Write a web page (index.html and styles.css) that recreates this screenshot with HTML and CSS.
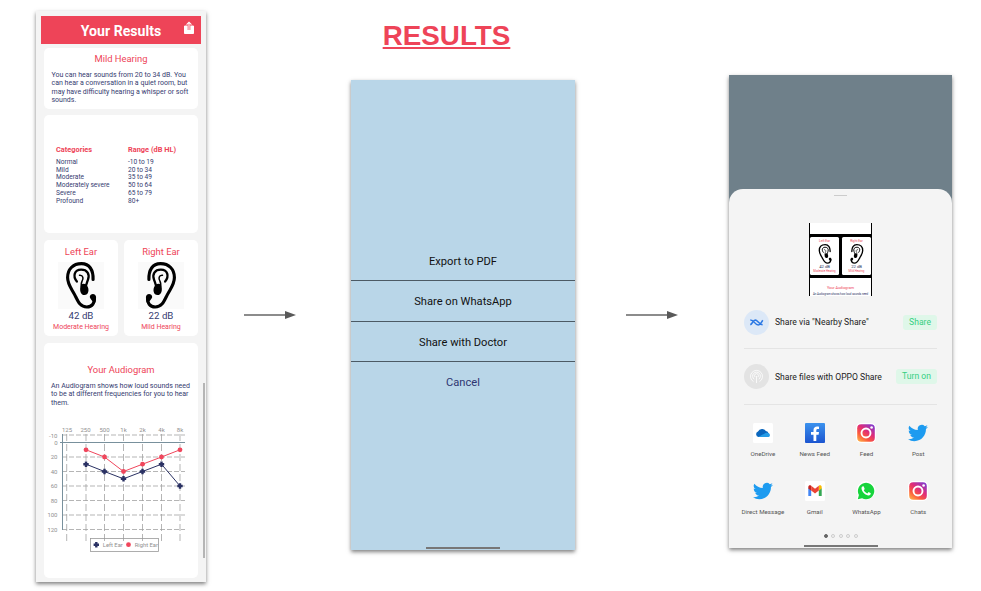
FILE: index.html
```html
<!DOCTYPE html>
<html lang="en">
<head>
<meta charset="utf-8">
<title>Results</title>
<link rel="stylesheet" href="styles.css">
</head>
<body>
<svg class="defs" width="0" height="0">
  <defs>
    <symbol id="ear" viewBox="84 96 137 142">
      <path d="M189 149C190 120 178 101 154 101C128 101 112 118 112 143C112 165 125 178 134 196C144 216 150 232 170 232C187 232 194 219 193 205" fill="none" stroke="#000" stroke-width="9.500" stroke-linecap="round"/>
      <path d="M179 202C179 191 197 189 198 202C199 214 194 222 190 225C191 215 182 212 179 202z"/>
      <path d="M140 155C127 139 132 119 153 119C172 119 179 133 174 148C171 158 167 163 166 178" fill="none" stroke="#000" stroke-width="7" stroke-linecap="round"/>
      <path d="M148 136C160 135 160 147 156 153C152 160 152 165 155 175" fill="none" stroke="#000" stroke-width="4.500" stroke-linecap="round"/>
      <path d="M152 166C158 160 166 160 171 168C179 180 175 196 163 196C151 196 147 180 152 166z"/>
    </symbol>
    <symbol id="bird" viewBox="0 0 24 24">
      <path fill="#1d9bf0" d="M23.95 4.57a10 10 0 0 1-2.82.77 4.96 4.96 0 0 0 2.16-2.72c-.95.55-2 .95-3.13 1.18a4.92 4.92 0 0 0-8.38 4.48C7.69 8.09 4.07 6.13 1.64 3.16a4.93 4.93 0 0 0 1.52 6.57 4.9 4.9 0 0 1-2.23-.61v.06a4.92 4.92 0 0 0 3.95 4.83 5 5 0 0 1-2.21.08 4.94 4.94 0 0 0 4.6 3.42A9.87 9.87 0 0 1 0 19.54a13.99 13.99 0 0 0 7.55 2.21c9.05 0 14-7.5 14-13.98 0-.21 0-.42-.02-.63a9.94 9.94 0 0 0 2.42-2.57z"/>
    </symbol>
    <linearGradient id="igGrad" x1="0" y1="1" x2=".75" y2="0">
      <stop offset="0" stop-color="#ffc04a"/><stop offset=".35" stop-color="#fb5a3c"/><stop offset=".65" stop-color="#e02c79"/><stop offset="1" stop-color="#8a3ac8"/>
    </linearGradient>
    <symbol id="insta" viewBox="0 0 20 20">
      <rect width="20" height="20" rx="5" fill="#fff"/>
      <rect x="1.2" y="1.2" width="17.6" height="17.6" rx="4" fill="url(#igGrad)"/>
      <circle cx="10" cy="10" r="4.5" fill="none" stroke="#fff" stroke-width="1.9"/>
      <circle cx="15.6" cy="4.5" r="1.3" fill="#fff"/>
    </symbol>
  </defs>
</svg>
<main class="board">
  <section class="phone report">
    <header class="topbar">
      <h2>Your Results</h2>
      <svg class="export" viewBox="0 0 12 14"><path d="M1.500 5h9v7.500h-9z" fill="#fff" stroke="#fff" stroke-linejoin="round"/><path d="M6 9V3" stroke="#ee4458" stroke-width="2.600"/><path d="M6 9.500V2M3.600 3.600L6 1.200l2.400 2.400" fill="none" stroke="#fff" stroke-width="1.100"/></svg>
    </header>
    <article class="card level">
      <h3>Mild Hearing</h3>
      <p>You can hear sounds from 20 to 34 dB. You<br>can hear a conversation in a quiet room, but<br>may have difficulty hearing a whisper or soft<br>sounds.</p>
    </article>
    <article class="card ranges">
      <div><h4>Categories</h4><p>Normal<br>Mild<br>Moderate<br>Moderately severe<br>Severe<br>Profound</p></div>
      <div><h4>Range (dB HL)</h4><p>-10 to 19<br>20 to 34<br>35 to 49<br>50 to 64<br>65 to 79<br>80+</p></div>
    </article>
    <div class="ears">
      <article class="card ear"><h3>Left Ear</h3><svg class="ear-pic"><use href="#ear"/></svg><strong>42 dB</strong><span>Moderate Hearing</span></article>
      <article class="card ear"><h3>Right Ear</h3><svg class="ear-pic flip"><use href="#ear"/></svg><strong>22 dB</strong><span>Mild Hearing</span></article>
    </div>
    <article class="card audiogram">
      <h3>Your Audiogram</h3>
      <p>An Audiogram shows how loud sounds need<br>to be at different frequencies for you to hear<br>them.</p>
      <svg class="chart" viewBox="44 420 154 135">
        <g class="grid">
          <path d="M62 435H185M62 457H185M62 471.5H185M62 486H185M62 500.5H185M62 515H185M62 529.5H185"/>
          <path class="cols" d="M66.7 434V544M86 434V544M104.5 434V544M123.5 434V544M142.5 434V544M161.5 434V544M180 434V544"/>
        </g>
        <path class="axis" d="M62.5 434V530M60 442.5H185"/>
        <g class="tick mid"><text x="67" y="432">125</text><text x="85.500" y="432">250</text><text x="104.500" y="432">500</text><text x="123.500" y="432">1k</text><text x="142.500" y="432">2k</text><text x="161.500" y="432">4k</text><text x="180" y="432">8k</text></g>
        <g class="tick end"><text x="57.500" y="437.500">-10</text><text x="57.500" y="444.800">0</text><text x="57.500" y="459.300">20</text><text x="57.500" y="473.800">40</text><text x="57.500" y="488.300">60</text><text x="57.500" y="502.800">80</text><text x="57.500" y="517.300">100</text><text x="57.500" y="531.800">120</text></g>
        <path class="line right" d="M86 449.8L104.500 457L123.500 471.500L142.500 464.200L161.500 457L180 449.800"/>
        <path class="line left" d="M86 464.200L104.500 471.500L123.500 478.800L142.500 471.500L161.500 464.200L180 486"/>
        <g fill="#f0465c"><circle cx="86" cy="449.800" r="2.400"/><circle cx="104.500" cy="457" r="2.400"/><circle cx="123.500" cy="471.500" r="2.400"/><circle cx="142.500" cy="464.200" r="2.400"/><circle cx="161.500" cy="457" r="2.400"/><circle cx="180" cy="449.800" r="2.400"/><circle cx="128.500" cy="544.700" r="2.400"/></g>
        <path class="plus" d="M83.300 464.200h5.400m-2.700-2.700v5.400M101.800 471.500h5.400m-2.700-2.700v5.400M120.800 478.800h5.400m-2.700-2.700v5.400M139.800 471.500h5.400m-2.700-2.700v5.400M158.800 464.200h5.400m-2.700-2.700v5.400M177.300 486h5.400m-2.700-2.700v5.400M93.600 544.700h5.400m-2.700-2.700v5.400"/>
        <rect class="legend-box" x="90.500" y="538.500" width="68" height="13"/>
        <g class="tick legend"><text x="102.800" y="547">Left Ear</text><text x="134.800" y="547">Right Ear</text></g>
      </svg>
    </article>
    <i class="scrollbar"></i>
  </section>

  <svg class="arrow first" viewBox="0 0 52 10"><path d="M0 5H42" stroke="#666" stroke-width="1.500"/><path d="M41 1L52 5L41 9z" fill="#595959"/></svg>

  <div class="middle">
    <h1>RESULTS</h1>
    <section class="phone menu">
      <ul>
        <li>Export to PDF</li>
        <li>Share on WhatsApp</li>
        <li>Share with Doctor</li>
        <li class="cancel">Cancel</li>
      </ul>
      <i class="home"></i>
    </section>
  </div>

  <svg class="arrow second" viewBox="0 0 52 10"><path d="M0 5H42" stroke="#666" stroke-width="1.500"/><path d="M41 1L52 5L41 9z" fill="#595959"/></svg>

  <section class="phone share">
    <div class="sheet">
      <i class="handle"></i>
      <div class="preview">
        <div class="p-top"></div>
        <div class="p-ears">
          <div><b>Left Ear</b><svg><use href="#ear"/></svg><em>42 dB</em><b>Moderate Hearing</b></div>
          <div><b>Right Ear</b><svg class="flip"><use href="#ear"/></svg><em>22 dB</em><b>Mild Hearing</b></div>
        </div>
        <div class="p-end"><b>Your Audiogram</b><em>An Audiogram shows how loud sounds need</em></div>
      </div>
      <div class="option">
        <svg viewBox="0 0 25 25"><circle cx="12.500" cy="12.500" r="12.500" fill="#dce8f7"/><g fill="none" stroke="#2b78e4" stroke-width="1.500"><path d="M6.300 10c2.400 0 3.200 1.200 4.300 2.600s2 2.400 3.700 2.400c2 0 2.700-2.200 4.500-4.700M6.300 14.800c2-.8 2.700-4.500 5-4.700 2.400 0 3.600 4.400 7.300 4.700"/></g></svg>
        <span>Share via "Nearby Share"</span><button>Share</button>
      </div>
      <div class="option">
        <svg viewBox="0 0 25 25"><circle cx="12.500" cy="12.500" r="12.500" fill="#e3e3e3"/><g fill="none" stroke="#fff" stroke-width=".8"><path d="M9.500 17.600a6 6 0 1 1 6 0M10.200 15.200a3.900 3.900 0 1 1 4.600 0M11 13a2 2 0 1 1 3 0M12.500 12v7"/></g></svg>
        <span>Share files with OPPO Share</span><button>Turn on</button>
      </div>
      <div class="apps">
        <div><svg viewBox="0 0 20 20"><rect width="20" height="20" rx="1.500" fill="#fff"/><path d="M5.500 14A2.800 2.800 0 0 1 5 8.600 4.500 4.500 0 0 1 12.900 8a3.400 3.400 0 0 1 1.600 6z" fill="#0b66bd"/><path d="M5.200 14l7-3.800c2.500-1 5 .2 4.700 2.300-.1 1-1 1.500-2.400 1.500z" fill="#249be6"/></svg>OneDrive</div>
        <div><svg viewBox="0 0 20 20"><linearGradient id="fb" x2="0" y2="1"><stop stop-color="#3b92ee"/><stop offset="1" stop-color="#1c55d0"/></linearGradient><rect width="20" height="20" rx="1" fill="url(#fb)"/><path d="M8.500 18v-6.300H6V9h2.500V7.200C8.500 4.700 10 3.500 12.100 3.500c.8 0 1.600.1 1.900.2V6h-1.300c-1.100 0-1.400.6-1.400 1.400V9H14l-.4 2.700h-2.300V18z" fill="#fff"/></svg>News Feed</div>
        <div><svg><use href="#insta"/></svg>Feed</div>
        <div><svg class="wide"><use href="#bird"/></svg>Post</div>
        <div><svg class="wide"><use href="#bird"/></svg>Direct Message</div>
        <div><svg viewBox="0 0 20 20"><rect width="20" height="20" rx="1.500" fill="#fff"/><path d="M3.300 7v8h2.900V9z" fill="#4285f4"/><path d="M16.700 7v8h-2.900V9z" fill="#34a853"/><path d="M3.300 7.500V6c0-1.600 1.700-2.100 2.900-1.200v4.900z" fill="#c5221f"/><path d="M16.700 7.500V6c0-1.600-1.700-2.100-2.900-1.200v4.900z" fill="#fbbc04"/><path d="M6.200 4.800L10 7.700l3.800-2.900v4.700L10 12.400 6.200 9.500z" fill="#ea4335"/></svg>Gmail</div>
        <div><svg viewBox="0 0 20 20"><path d="M1 19l1-5.500A9 9 0 1 1 7 18z" fill="#fff" stroke="#fff"/><path d="M1.800 18.300l1.100-4.300a8.200 8.200 0 1 1 3.200 3.200z" fill="#17d43c"/><path d="M7 5.300c-.5 0-1.600.8-1.500 2.300.3 3.500 4.200 7 7.200 6.900 1.200 0 2.200-1.200 2.100-2.200l-2.200-1.200-1.200 1.300c-1.900-.7-2.900-1.900-3.600-3.200l.9-1.200-.9-2.400z" fill="#fff"/></svg>WhatsApp</div>
        <div><svg><use href="#insta"/></svg>Chats</div>
      </div>
      <div class="dots"><i class="on"></i><i></i><i></i><i></i><i></i></div>
      <i class="home"></i>
    </div>
  </section>
</main>
</body>
</html>
```
FILE: styles.css
```css
* { box-sizing: border-box; }
body { margin: 0; width: 981px; height: 591px; overflow: hidden; background: #fff; font-family: Roboto, sans-serif; }
h1, h2, h3, h4, p, ul { margin: 0; padding: 0; font-weight: 400; white-space: nowrap; }
.defs { position: absolute; }
.board { display: grid; grid-template-columns: 170px 38px 52px 55px 224px 51px 52px 51px 223px; padding: 11px 0 0 36px; align-items: start; }
.phone { box-shadow: 0 2px 4px rgba(0,0,0,.5); }
.arrow { width: 52px; height: 10px; margin-top: 299px; grid-row: 1; }
.first { grid-column: 3; }
.second { grid-column: 7; }
.report { grid-column: 1; height: 571px; background: #f4f4f4; padding: 5px 5px 0; position: relative; }
.topbar { height: 28px; background: #ee4458; color: #fff; display: flex; justify-content: center; align-items: center; position: relative; }
.topbar h2 { font-size: 14.100px; font-weight: 700; line-height: 28px; padding-top: 1px; }
.export { position: absolute; right: 6px; top: 5px; width: 12px; height: 14px; }
.card { background: #fff; border-radius: 5px; margin: 0 3px; color: #353c70; }
.card h3 { color: #ee4458; font-size: 9.400px; line-height: 12px; text-align: center; }
.level { margin-top: 4px; height: 61px; padding: 5px 0 0 7.500px; }
.level h3 { padding-right: 7.500px; }
.card p { font-size: 7px; line-height: 8.3px; }
.level p { margin-top: 6px; }
.ranges { margin-top: 6px; height: 118px; padding: 30px 0 0 12px; display: grid; grid-template-columns: 72px 1fr; }
.ranges h4 { color: #ee4458; font-weight: 700; font-size: 7.400px; line-height: 10px; margin-bottom: 4px; }
.ranges p { font-size: 6.600px; line-height: 7.7px; }
.ears { display: grid; grid-template-columns: 74px 74px; gap: 6px; padding: 7px 3px; }
.ears .card { margin: 0; }
.ear { height: 96px; padding-top: 6px; display: flex; flex-direction: column; align-items: center; }
.ear-pic { width: 46px; height: 47px; margin-top: 4px; background: #fafafa; flex: none; }
.flip { transform: scaleX(-1); }
.ear strong { font-weight: 400; font-size: 9.7px; line-height: 12px; margin-top: 1px; }
.ear span { font-size: 7px; line-height: 10px; color: #ee4458; white-space: nowrap; }
.audiogram { height: 235px; padding-top: 21px; }
.audiogram p { padding-left: 7px; margin-top: 6px; font-size: 7.050px; }
.chart { display: block; width: 154px; height: 135px; margin-top: 13px; }
.grid path { fill: none; stroke: #a2a2a2; stroke-width: .8; stroke-dasharray: 5 2; }
.grid .cols { stroke-dasharray: 7 3; }
.axis { fill: none; stroke: #78909c; stroke-width: 1; }
.tick { font-size: 6px; fill: #909090; }
.legend { font-size: 5.800px; }
.mid { text-anchor: middle; }
.end { text-anchor: end; }
.line { fill: none; stroke-width: 1; }
.right { stroke: #f0465c; }
.left { stroke: #2a3163; }
.plus { fill: none; stroke: #2a3163; stroke-width: 2.4; }
.legend-box { fill: none; stroke: #999; stroke-width: .8; }
.scrollbar { position: absolute; right: 1px; top: 372px; width: 2px; height: 175px; background: #b5b5b5; }
.middle { grid-column: 5; grid-row: 1; }
.middle h1 { font: 700 27.800px/32px "Liberation Sans", sans-serif; color: #ee4458; text-align: center; text-decoration: underline; text-decoration-thickness: 2px; text-underline-offset: 2px; margin: 9px 33px 28px 0; }
.menu { height: 470px; background: #b9d6e8; padding-top: 161px; display: flex; flex-direction: column; }
.menu ul { list-style: none; }
.menu li { height: 40.400px; border-bottom: 1px solid #4c5a64; text-align: center; font-size: 11.150px; line-height: 41px; color: #111; }
.menu .cancel { border: 0; color: #2e3570; }
.home { display: block; width: 74px; height: 2px; background: #777; margin: auto auto 1px; }
.share { grid-column: 9; grid-row: 1; margin-top: 64px; height: 473px; background: #6f808a; padding-top: 114px; }
.sheet { height: 359px; background: #f4f4f4; border-radius: 14px 14px 0 0; padding: 6px 15px 0; display: flex; flex-direction: column; }
.handle { width: 13px; height: 1px; background: #ccc; margin: 0 auto 27px; }
.preview { width: 63px; height: 73px; margin: 0 auto; background: #000; padding: 0 1px; display: flex; flex-direction: column; overflow: hidden; flex: none; }
.preview b, .preview em { font: 3.200px/4px Roboto, sans-serif; color: #ee4458; white-space: nowrap; display: block; text-align: center; }
.preview em { color: #2a3163; }
.p-top { height: 11px; background: #fff; }
.p-ears { display: grid; grid-template-columns: 1fr 1fr; gap: 3px; margin: 3px 0; }
.p-ears div { background: #fff; border-radius: 1.500px; height: 38px; padding-top: 2px; overflow: hidden; }
.p-ears svg { display: block; width: 20px; height: 20px; margin: 1px auto; }
.preview .p-ears em { font-size: 4.200px; }
.preview .p-ears b:last-child { font-size: 2.800px; }
.p-end { flex: 1; background: #fff; padding-top: 8px; }
.preview .p-end b { font-size: 3.800px; }
.preview .p-end em { font-size: 2.800px; margin-top: 2px; }
.option { height: 56px; border-bottom: 1px solid #e4e4e4; display: flex; align-items: center; font-size: 8.600px; color: #222; white-space: nowrap; flex: none; }
.option:nth-of-type(2) { height: 53px; }
.option svg { width: 25px; height: 25px; margin-right: 6px; }
.option button { margin-left: auto; border: 0; border-radius: 3px; background: #dff7e9; color: #35cf82; font: 8.600px/15px Roboto, sans-serif; padding: 0 6px; }
.apps { display: grid; grid-template-columns: repeat(4, 51.800px); grid-auto-rows: 57.500px; margin: 18px 0 0 -7px; }
.apps div { display: flex; flex-direction: column; align-items: center; font-size: 6.200px; line-height: 8px; color: #555; white-space: nowrap; }
.apps svg { width: 20px; height: 20px; margin-bottom: 7px; }
.apps .wide { width: 22px; }
.dots { display: flex; justify-content: center; gap: 3.500px; margin-top: -4px; }
.dots i { width: 4px; height: 4px; border: .8px solid #ccc; border-radius: 50%; }
.dots .on { background: #666; border-color: #666; }
```
